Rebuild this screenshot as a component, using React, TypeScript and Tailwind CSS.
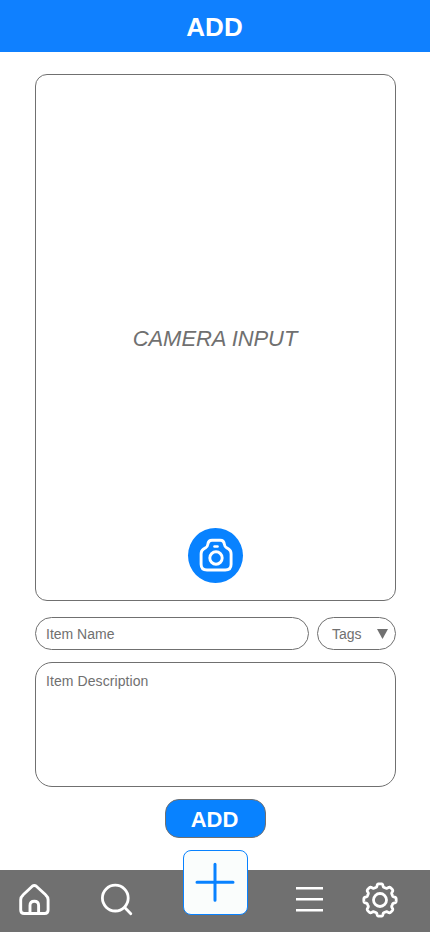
import React from "react";

// Eight-toothed gear outline, sampled in polar form around (20, 20).
const gearPath = (() => {
  const pts: string[] = [];
  for (let i = 0; i < 256; i++) {
    const a = (i / 256) * Math.PI * 2;
    const c = Math.cos(8 * a) + 0.05;
    const r = 14.7 + (1.5 * Math.tanh(2.6 * c)) / Math.tanh(2.6);
    pts.push(`${(20 + r * Math.sin(a)).toFixed(2)} ${(20 - r * Math.cos(a)).toFixed(2)}`);
  }
  return `M${pts.join("L")}Z`;
})();

function CameraIcon() {
  return (
    <svg width="36" height="36" viewBox="0 0 36 36" fill="none" stroke="white" strokeWidth="2.9" strokeLinejoin="round" strokeLinecap="round">
      <path d="M9.8 6.4 C10.2 3.2 11.4 2.2 14 2.2 H22.2 C24.8 2.2 26 3.2 26.4 6.4 C26.7 8.6 27.4 9.3 28.6 9.8 L30.6 11 C32.4 12.2 33.1 13.4 33.1 16 V26.2 C33.1 30.2 31.2 32 27.2 32 H9 C5 32 3.1 30.2 3.1 26.2 V16 C3.1 13.4 3.8 12.2 5.6 11 L7.6 9.8 C8.8 9.3 9.5 8.6 9.8 6.4 Z" />
      <circle cx="18" cy="20" r="6.2" />
      <path d="M16.5 8.5 H19.5" strokeWidth="2.6" />
    </svg>
  );
}

function HomeIcon() {
  return (
    <svg width="34" height="34" viewBox="0 0 34 34" fill="none" stroke="white" strokeWidth="2.9" strokeLinejoin="round">
      <path d="M15.3 3.2 Q17.3 1.6 19.3 3.2 L28.6 11.8 Q31.1 14 31.1 16.8 V27 Q31.1 30.5 27.6 30.5 H7.2 Q3.7 30.5 3.7 27 V16.8 Q3.7 14 6.2 11.8 Z" />
      <path d="M13 30.5 V22.5 Q13 18.3 17.3 18.3 Q21.6 18.3 21.6 22.5 V30.5" />
    </svg>
  );
}

function SearchIcon() {
  return (
    <svg width="34" height="34" viewBox="0 0 34 34" fill="none" stroke="white" strokeWidth="2.8" strokeLinecap="round">
      <circle cx="15.3" cy="15.1" r="12.9" />
      <path d="M24.7 24.5 L30.8 30.8" />
    </svg>
  );
}

function MenuIcon() {
  return (
    <svg width="28" height="28" viewBox="0 0 28 28" fill="none" stroke="white" strokeWidth="2.6">
      <path d="M1 3.3 H28 M1 14.3 H28 M1 25.3 H28" />
    </svg>
  );
}

function GearIcon() {
  return (
    <svg width="40" height="40" viewBox="0 0 40 40" fill="none" stroke="white" strokeWidth="2.8" strokeLinejoin="round">
      <path d={gearPath} />
      <circle cx="20" cy="20" r="6.5" />
    </svg>
  );
}

export default function App() {
  return (
    <div className="flex h-[932px] w-[430px] flex-col overflow-hidden bg-white font-['Liberation_Sans',Arial,sans-serif] text-[#707070]">
      <header className="flex h-[52px] shrink-0 items-center justify-center bg-[#0f80ff] pt-[2px] pr-px text-[26px] font-bold leading-none text-white">
        ADD
      </header>
      <main className="flex flex-1 flex-col pr-[34px] pl-[35px] pt-[22px]">
        <section className="flex h-[527px] flex-col items-center rounded-[12px] border border-[#707070]">
          <p className="mt-[251px] pr-px text-[22px] leading-[26px] tracking-[-0.07px] italic">CAMERA INPUT</p>
          <button className="mt-auto mb-[17px] flex size-[55px] items-center justify-center rounded-full bg-[#0882ff]">
            <CameraIcon />
          </button>
        </section>
        <div className="mt-4 flex h-[33px] gap-2 text-[14px]">
          <div className="flex w-[274px] items-center rounded-full border border-[#707070] pt-[2px] pl-[10px]">Item Name</div>
          <div className="flex flex-1 items-center justify-between rounded-full border border-[#707070] pr-[7px] pl-[14px]">
            <span className="pt-[2px]">Tags</span>
            <svg width="11" height="10" viewBox="0 0 11 10"><path d="M0 0H11L5.5 10Z" fill="#707070" /></svg>
          </div>
        </div>
        <div className="mt-3 h-[125px] rounded-[17px] border border-[#707070] pt-[10px] pl-[10px] text-[14px] leading-4 tracking-[0.08px]">
          Item Description
        </div>
        <button className="mt-3 ml-[130px] flex h-[39px] w-[101px] items-center justify-center rounded-[14px] border border-[#707070] bg-[#0882ff] pt-[2px] pr-[2px] text-[22px] font-bold leading-none text-white">
          ADD
        </button>
      </main>
      <nav className="relative h-[62px] shrink-0 bg-[#707070]">
        <div className="flex h-full items-start">
          <div className="mt-[13px] ml-[17px]"><HomeIcon /></div>
          <div className="mt-[13px] ml-[49px]"><SearchIcon /></div>
          <div className="mt-[15px] ml-[161px]"><MenuIcon /></div>
          <div className="mt-[10px] ml-[37px]"><GearIcon /></div>
        </div>
        <button className="absolute -top-5 left-[183px] flex size-[65px] items-center justify-center rounded-[8px] border border-[#0882ff] bg-[#fafdfc]">
          <svg width="41" height="41" viewBox="0 0 41 41" stroke="#0882ff" strokeWidth="3" strokeLinecap="round">
            <path d="M20 2.2 V38.2 M2 20.3 H38" />
          </svg>
        </button>
      </nav>
    </div>
  );
}
